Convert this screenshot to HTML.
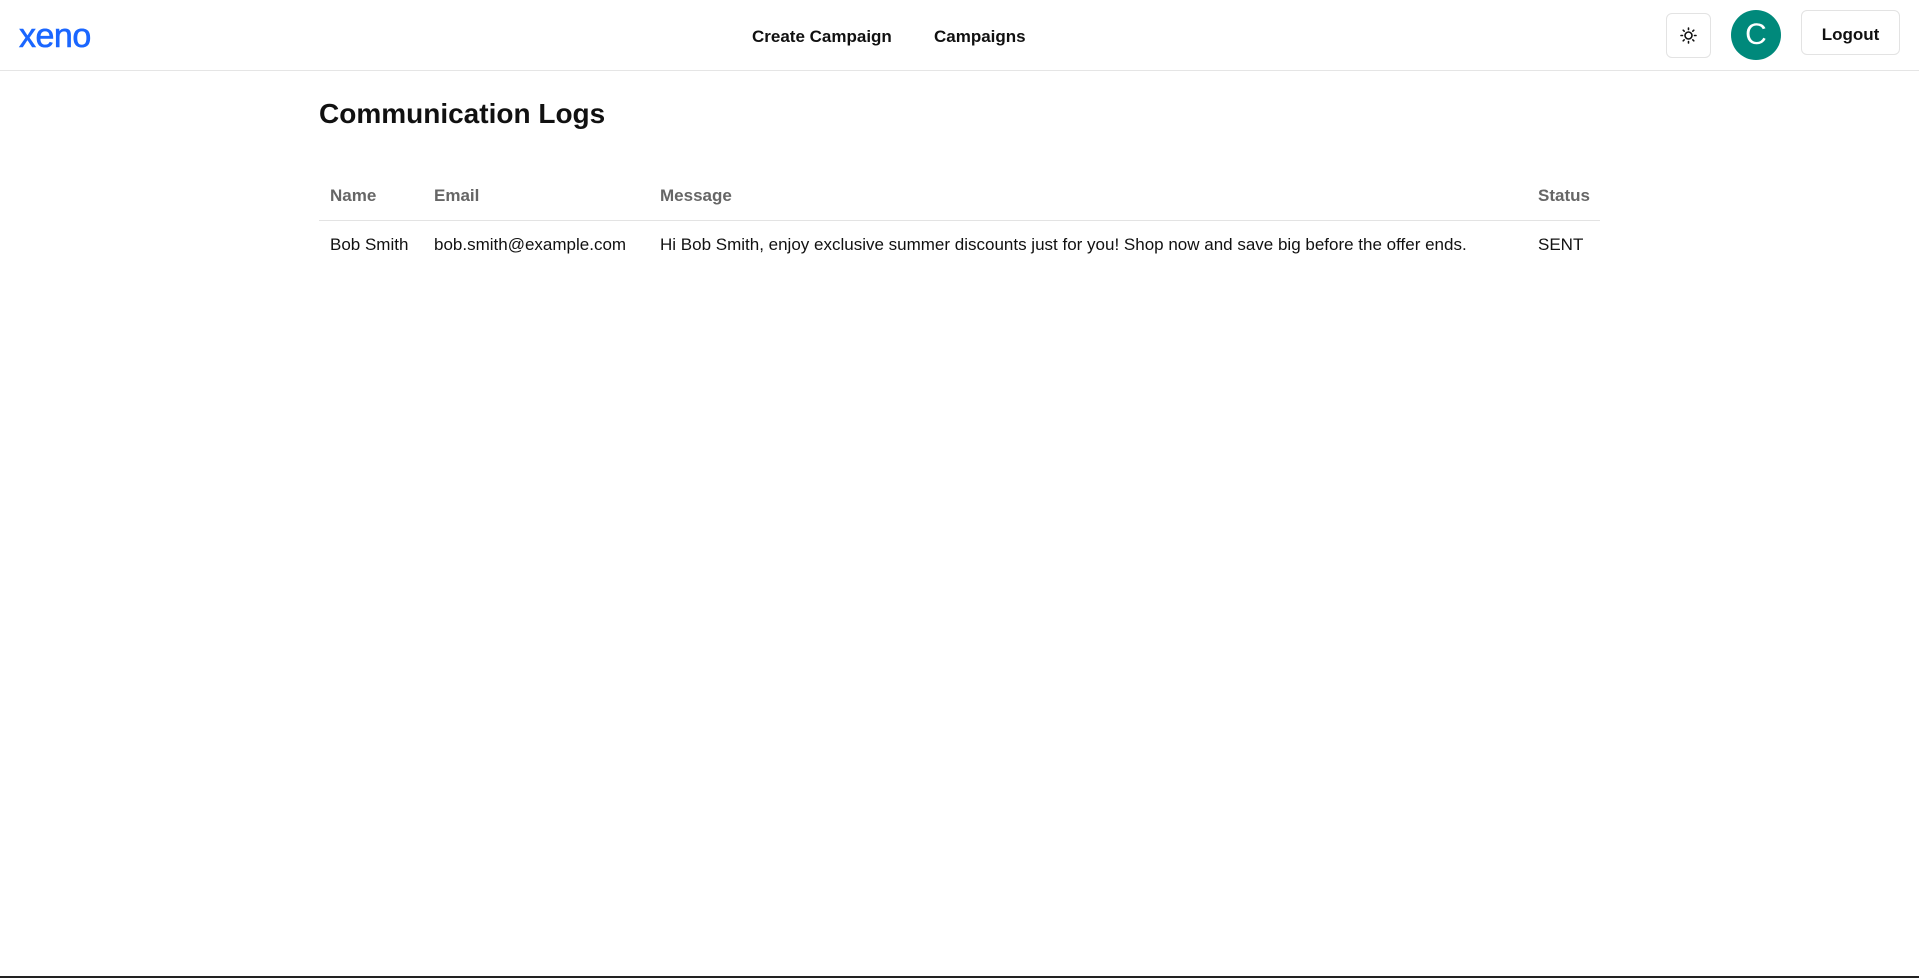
<!DOCTYPE html>
<html><head><style>
body{margin:0;width:1919px;height:978px;background:#fff;font-family:"Liberation Sans",sans-serif;color:#111;position:relative;overflow:hidden}
.hdr{position:absolute;left:0;top:0;width:1919px;height:70px;border-bottom:1px solid #e5e5e5}
.logo{position:absolute;left:19px;top:17px;font-size:34px;color:#1a66ff;letter-spacing:-0.5px;-webkit-text-stroke:0.6px #1a66ff}
.nav{position:absolute;top:27px;font-size:17px;font-weight:bold;color:#111}
.sun{position:absolute;left:1666px;top:13px;width:43px;height:43px;border:1px solid #e3e3e3;border-radius:6px}
.av{position:absolute;left:1731px;top:10px;width:50px;height:50px;border-radius:50%;background:#00897b;color:#fff;font-size:30px;text-align:center;line-height:50px}
.lo{position:absolute;left:1801px;top:10px;width:97px;height:43px;border:1px solid #e3e3e3;border-radius:6px;text-align:center;line-height:47px;font-size:17px;font-weight:bold}
h1{position:absolute;left:319px;top:98px;margin:0;font-size:28px;font-weight:bold}
.t{position:absolute;font-size:17px}
.th{color:#666;font-weight:bold;top:186px}
.td{top:235px}
.line{position:absolute;left:319px;top:220px;width:1281px;height:1px;background:#e3e3e3}
</style></head><body>
<div class="hdr"></div>
<div class="logo">xeno</div>
<div class="nav" style="left:752px">Create Campaign</div>
<div class="nav" style="left:934px">Campaigns</div>
<div class="sun"><svg width="43" height="43" viewBox="0 0 43 43"><g stroke="#111" stroke-width="1.6" fill="none" stroke-linecap="round"><circle cx="21.5" cy="21.5" r="3.5"/><path d="M21.5 14v1.5M21.5 27.5v1.5M14 21.5h1.5M27.5 21.5h1.5M16.2 16.2l1 1M25.8 25.8l1 1M16.2 26.8l1-1M25.8 17.2l1-1"/></g></svg></div>
<div class="av">C</div>
<div class="lo">Logout</div>
<h1>Communication Logs</h1>
<div class="t th" style="left:330px">Name</div>
<div class="t th" style="left:434px">Email</div>
<div class="t th" style="left:660px">Message</div>
<div class="t th" style="left:1538px">Status</div>
<div class="line"></div>
<div class="t td" style="left:330px">Bob Smith</div>
<div class="t td" style="left:434px">bob.smith@example.com</div>
<div class="t td" style="left:660px">Hi Bob Smith, enjoy exclusive summer discounts just for you! Shop now and save big before the offer ends.</div>
<div class="t td" style="left:1538px">SENT</div>
<div style="position:absolute;left:0;top:976px;width:1919px;height:2px;background:#222"></div>
</body></html>
